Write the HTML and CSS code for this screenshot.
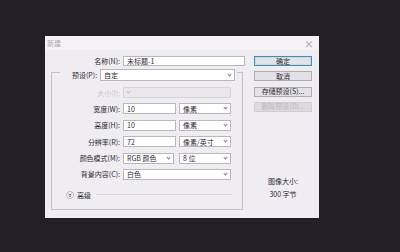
FILE: index.html
```html
<!DOCTYPE html>
<html lang="zh">

<head>
  <meta charset="UTF-8">
  <meta name="viewport" content="width=device-width, initial-scale=1.0">
  <title>新建</title>

  <link rel="stylesheet" href="styles.css">
</head>

<body>
  <main class="dialog">
    <header class="titlebar">
      <span class="title">新建</span>
      <span class="close">×</span>
    </header>

    <div class="dialog-body">
      <form class="form">
        <div class="row name-row">
          <label>名称(N):</label>
          <span class="field wide">未标题-1</span>
        </div>

        <div class="group">
          <div class="legend">
            <label>预设(P):</label>
            <span class="field select preset">自定<i class="arrow"></i></span>
          </div>

          <div class="row disabled">
            <label>大小(I):</label>
            <span class="field select full"><i class="arrow"></i></span>
          </div>
          <div class="row">
            <label>宽度(W):</label>
            <span class="field num">10</span>
            <span class="field select unit">像素<i class="arrow"></i></span>
          </div>
          <div class="row">
            <label>高度(H):</label>
            <span class="field num">10</span>
            <span class="field select unit">像素<i class="arrow"></i></span>
          </div>
          <div class="row">
            <label>分辨率(R):</label>
            <span class="field num">72</span>
            <span class="field select unit">像素/英寸<i class="arrow"></i></span>
          </div>
          <div class="row">
            <label>颜色模式(M):</label>
            <span class="field select mode">RGB 颜色<i class="arrow"></i></span>
            <span class="field select unit">8 位<i class="arrow"></i></span>
          </div>
          <div class="row">
            <label>背景内容(C):</label>
            <span class="field select full">白色<i class="arrow"></i></span>
          </div>

          <div class="advanced">
            <svg class="toggle" width="8" height="8" viewBox="0 0 8 8">
              <circle cx="4" cy="4" r="3.5" fill="#fff" stroke="#9a97a0" stroke-width="0.7" />
              <path d="M2.5 2.6 L4 3.8 L5.5 2.6 M2.5 4.4 L4 5.6 L5.5 4.4" fill="none" stroke="#444" stroke-width="0.8" />
            </svg>
            <span>高级</span>
            <span class="rule"></span>
          </div>
        </div>
      </form>

      <aside class="side">
        <button class="btn default">确定</button>
        <button class="btn">取消</button>
        <button class="btn">存储预设(S)...</button>
        <button class="btn" disabled>删除预设(D)...</button>

        <div class="info">
          <p>图像大小:</p>
          <p>300 字节</p>
        </div>
      </aside>
    </div>
  </main>
</body>

</html>
```

FILE: styles.css
```css
body {
  background: #241f26;
  font-family: "Noto Sans CJK SC", "Noto Sans", sans-serif;
  font-size: 7px;
  height: 252px;
  margin: 0;
  overflow: hidden;
}

.dialog {
  background: #efedf1;
  color: #2e2c30;
  height: 182px;
  margin: 36px 0 0 45px;
  width: 274px;
}

.titlebar {
  align-items: center;
  background: #f4f2f5;
  display: flex;
  height: 14px;
  justify-content: space-between;
  padding: 0 5px 0 2px;
}

.title {
  color: #a9a6ac;
}

.close {
  color: #9b989e;
  font-size: 10px;
}

.dialog-body {
  display: flex;
  padding-top: 6px;
}

.form {
  width: 200px;
}

.row {
  align-items: center;
  display: flex;
  height: 10px;
}

label {
  flex-shrink: 0;
  white-space: nowrap;
}

.row label,
.legend label {
  padding-right: 3px;
  text-align: right;
}

.name-row label {
  width: 75px;
}

.field {
  align-items: center;
  background: #fff;
  border: 1px solid #b9b6bc;
  box-sizing: border-box;
  display: flex;
  flex-shrink: 0;
  height: 100%;
  padding-left: 3px;
  white-space: nowrap;
}

.wide {
  width: 122px;
}

.select {
  justify-content: space-between;
  padding-right: 3px;
}

.arrow {
  border-bottom: 1px solid #7d7a80;
  border-right: 1px solid #7d7a80;
  height: 2px;
  margin-bottom: 2px;
  transform: rotate(45deg);
  width: 2px;
}

.group {
  border: 1px solid #c5c2c8;
  box-sizing: border-box;
  height: 138px;
  margin: 6px 0 0 6px;
  width: 192px;
}

.legend {
  align-items: center;
  background: #efedf1;
  display: flex;
  height: 12px;
  margin: -4px 0 0 8px;
  padding: 0 2px 0 12px;
  width: 163px;
}

.preset {
  flex: 1;
  flex-shrink: 1;
}

.group .row {
  height: 11px;
  margin-top: 5.4px;
}

.group .legend + .row {
  margin-top: 6px;
}

.group .row label {
  width: 68px;
}

.num {
  margin-right: 3px;
  width: 53px;
}

.unit {
  width: 52px;
}

.mode {
  margin-right: 5px;
  width: 51px;
}

.full {
  width: 108px;
}

.disabled label {
  color: #c8c5cb;
}

.disabled .field {
  background: #e9e7eb;
  border-color: #d6d3d9;
}

.disabled .arrow {
  border-color: #c4c1c7;
}

.advanced {
  align-items: center;
  display: flex;
  gap: 3px;
  height: 10px;
  margin: 10px 0 0 14px;
}

.rule {
  border-top: 1px solid #d9d6dc;
  margin-left: 2px;
  width: 136px;
}

.side {
  display: flex;
  flex-direction: column;
  gap: 5.3px;
  margin-left: 9px;
  width: 58px;
}

.btn {
  background: #e3e1e5;
  border: 1px solid #aeabb1;
  color: #2e2c30;
  font-family: inherit;
  font-size: 7px;
  height: 10px;
  line-height: 1;
  padding: 0;
}

.btn.default {
  border-color: #3f8fb4;
  box-shadow: inset 0 0 0 1px #c7dbe6;
}

.btn:disabled {
  background: #dcdadd;
  border-color: #d0cdd2;
  color: #b9b6bb;
}

.info {
  margin-top: 58px;
  text-align: center;
}

.info p {
  line-height: 13px;
  margin: 0;
}
```
